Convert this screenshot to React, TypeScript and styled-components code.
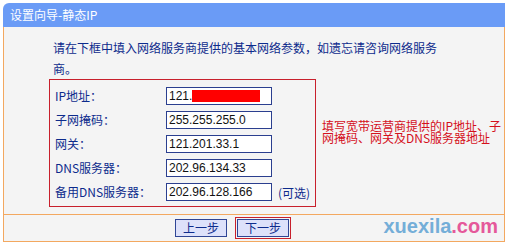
import React from "react";
import styled, { createGlobalStyle } from "styled-components";

const GlobalStyle = createGlobalStyle`
  html, body {
    margin: 0;
    padding: 0;
    background: #ffffff;
  }
  body {
    font-family: "Noto Sans CJK SC", "DejaVu Sans", sans-serif;
    font-size: 12px;
  }
`;

const Page = styled.div`
  position: relative;
  width: 507px;
  height: 245px;
  padding: 3px 0 0 3px;
  box-sizing: border-box;
`;

const Panel = styled.div`
  width: 502px;
  display: flex;
  flex-direction: column;
`;

const Header = styled.div`
  height: 24px;
  background: #6a9bf6;
  border-top-left-radius: 6px;
  color: #ffffff;
  display: flex;
  align-items: center;
  padding-left: 7px;
  font-size: 12px;
  line-height: 24px;
`;

const Body = styled.div`
  background: #f4f4f4;
  border: 1px solid #f3a860;
  border-top: none;
  height: 215px;
  box-sizing: border-box;
  display: flex;
  flex-direction: column;
`;

const Content = styled.div`
  padding: 10px 0 0 45px;
  height: 187px;
  box-sizing: border-box;
`;

const Intro = styled.p`
  margin: 0 0 0 4px;
  width: 396px;
  color: #0d2b8c;
  font-size: 12px;
  line-height: 21px;
`;

const Row = styled.div`
  display: flex;
  align-items: flex-start;
`;

const FormBox = styled.div`
  width: 267px;
  height: 128px;
  box-sizing: border-box;
  border: 1px solid #c8202c;
  padding: 4px 0 0 5px;
  display: flex;
  flex-direction: column;
`;

const FieldRow = styled.div`
  height: 24px;
  display: flex;
  align-items: center;
`;

const Label = styled.span`
  width: 111px;
  color: #0d2b8c;
  font-size: 12px;
  line-height: 14px;
`;

const Field = styled.div`
  width: 106px;
  height: 18px;
  box-sizing: border-box;
  background: #ffffff;
  border: 1px solid #2b3f8f;
  padding-left: 2px;
  display: flex;
  align-items: center;
  color: #111111;
  font-family: "Liberation Sans", Arial, sans-serif;
  font-size: 12px;
`;

const Redact = styled.span`
  display: inline-block;
  width: 68px;
  height: 12px;
  background: #ff0000;
`;

const Optional = styled.span`
  margin-left: 6px;
  color: #0d2b8c;
  font-size: 12px;
`;

const Note = styled.div`
  margin: 41px 0 0 6px;
  width: 182px;
  color: #d4101c;
  font-size: 12px;
  line-height: 12px;
`;

const Footer = styled.div`
  flex: 1;
  border-top: 1px solid #f3a860;
  display: flex;
  align-items: center;
  padding-left: 171px;
  gap: 10px;
`;

const Button = styled.button<{ $active?: boolean }>`
  width: 52px;
  height: 18px;
  box-sizing: border-box;
  padding: 0;
  background: #dde1fa;
  border: 1px solid #2f4595;
  color: #0d2b8c;
  font-family: "Noto Sans CJK SC", sans-serif;
  font-size: 12px;
  line-height: 16px;
  outline: ${(p) => (p.$active ? "1px solid #c8202c" : "none")};
  outline-offset: 1px;
`;

const Watermark = styled.div`
  position: absolute;
  right: 9px;
  bottom: 9px;
  font-family: "Liberation Sans", Arial, sans-serif;
  font-weight: bold;
  font-size: 20px;
  line-height: 20px;
  color: #74aed8;
`;

const Dot = styled.span`
  color: #e5589a;
`;

const fields = [
  { label: "IP地址：", value: "121.", redacted: true },
  { label: "子网掩码：", value: "255.255.255.0" },
  { label: "网关：", value: "121.201.33.1" },
  { label: "DNS服务器：", value: "202.96.134.33" },
  { label: "备用DNS服务器：", value: "202.96.128.166", optional: true },
];

export default function App() {
  return (
    <Page>
      <GlobalStyle />
      <Panel>
        <Header>设置向导-静态IP</Header>
        <Body>
          <Content>
            <Intro>
              请在下框中填入网络服务商提供的基本网络参数，如遗忘请咨询网络服务商。
            </Intro>
            <Row>
              <FormBox>
                {fields.map((f) => (
                  <FieldRow key={f.label}>
                    <Label>{f.label}</Label>
                    <Field>
                      {f.value}
                      {f.redacted && <Redact />}
                    </Field>
                    {f.optional && <Optional>(可选)</Optional>}
                  </FieldRow>
                ))}
              </FormBox>
              <Note>填写宽带运营商提供的IP地址、子网掩码、网关及DNS服务器地址</Note>
            </Row>
          </Content>
          <Footer>
            <Button>上一步</Button>
            <Button $active>下一步</Button>
          </Footer>
        </Body>
      </Panel>
      <Watermark>
        xuexila<Dot>.com</Dot>
      </Watermark>
    </Page>
  );
}
